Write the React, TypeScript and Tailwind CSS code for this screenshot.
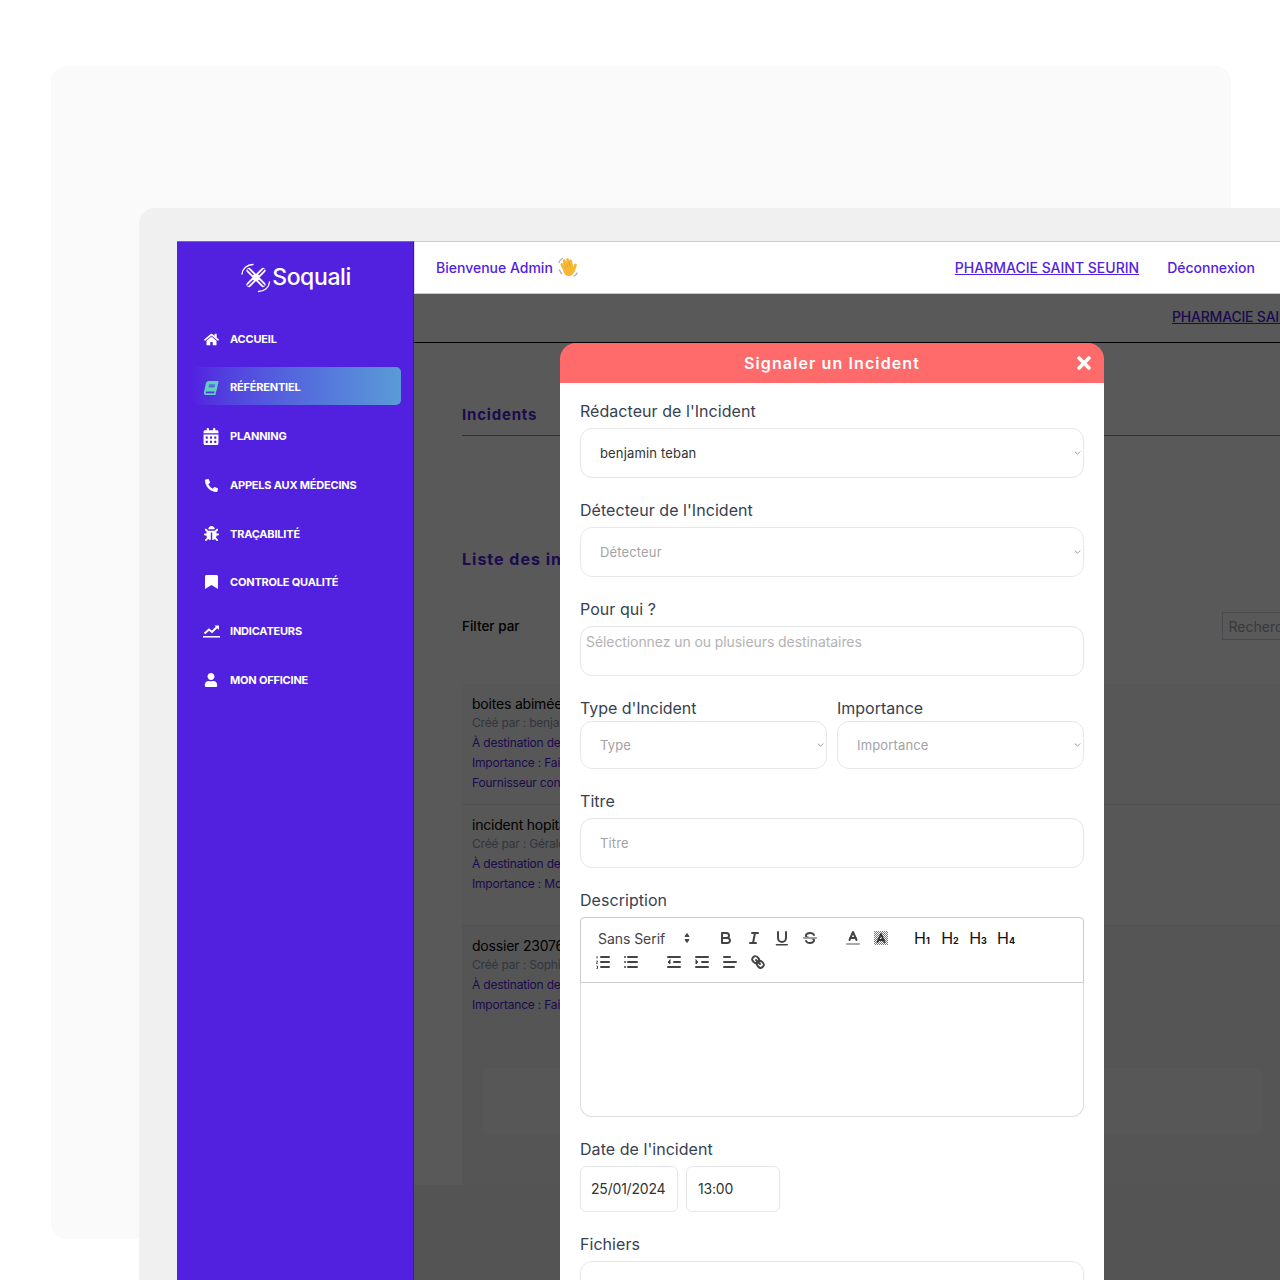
import { FaBook, FaBug, FaCalendarAlt, FaHome, FaPhoneAlt, FaTimes, FaUser } from "react-icons/fa";
import type { ReactNode } from "react";

const inter = "font-['Inter','Noto_Sans',sans-serif]";

const navItems = [
  { label: "ACCUEIL", icon: <FaHome size={15} /> },
  { label: "RÉFÉRENTIEL", icon: <FaBook size={14} className="-skew-x-12 text-[#5fd0c0]" />, active: true },
  { label: "PLANNING", icon: <FaCalendarAlt size={17} /> },
  { label: "APPELS AUX MÉDECINS", icon: <FaPhoneAlt size={13} /> },
  { label: "TRAÇABILITÉ", icon: <FaBug size={15} /> },
  {
    label: "CONTROLE QUALITÉ",
    icon: (
      <svg width="13" height="14" viewBox="0 0 13 14" fill="white">
        <path d="M0 1.500C0 .6.6 0 1.500 0h10c.9 0 1.500.6 1.500 1.500V14L6.500 10 0 14z" />
      </svg>
    ),
  },
  {
    label: "INDICATEURS",
    icon: (
      <svg width="17" height="14" viewBox="0 0 17 14" fill="none" stroke="white" className="shrink-0">
        <path d="M1.500 9.500L6 5.500l3 2.500 5-5" strokeWidth="2" />
        <path d="M11.500 1.500H16V6z" fill="white" stroke="none" />
        <path d="M0 12.800h17" strokeWidth="1.500" />
      </svg>
    ),
  },
  { label: "MON OFFICINE", icon: <FaUser size={14} /> },
];

function Logo() {
  return (
    <svg width="32" height="30" viewBox="0 0 32 30" fill="none" stroke="white" strokeLinecap="round">
      <path d="M2 11C2.500 5.500 7 1.500 13 1.500" strokeWidth="1.300" />
      <path d="M29.500 19c-.5 5.500-5 9.500-11 9.500" strokeWidth="1.300" />
      <path d="M9 7.500l14 14" strokeWidth="5" />
      <path d="M23 7.500l-14 14" strokeWidth="5" />
      <path d="M8 6.500l5 5M19 17.500l5 5M24 6.500l-5 5M13 17.500l-5 5" stroke="#5221e0" strokeWidth="1.400" />
    </svg>
  );
}

function WaveHand() {
  return (
    <svg width="20" height="20" viewBox="0 0 20 20" fill="none" strokeLinecap="round">
      <path d="M1 5.500C1.500 3.500 2.500 2.500 4.500 1.500M1.500 13c.5 1.500 1 2.500 2 3.500M16 19c1.500-.5 2.500-1.500 3-3" stroke="#a9adb3" strokeWidth="1.300" />
      <path d="M6 12L3.800 7.500M8.500 10L6 3.800M11 9L9.500 2.500M13.500 9.500l-.8-5.500M15.500 13.500L17.500 8" stroke="#f7b733" strokeWidth="2.800" />
      <path d="M4.500 10l10-3 2 7c-.5 3-3 5-6 5-3.500 0-5-3-6-9z" fill="#f7b733" />
      <path d="M7 10.500L5.500 6.500M9.500 9.500L8 4.500M12 9l-1-4.500" stroke="#d98f14" strokeWidth=".5" />
    </svg>
  );
}

function Sidebar() {
  return (
    <aside className="w-[237px] shrink-0 bg-[#5221e0] border-t border-t-[#7b5ce0] border-r border-r-[#333333] text-white">
      <div className="flex h-[76px] items-start justify-center pt-[21px] pl-[1px]">
        <Logo />
        <span className="mt-[3px] text-[23px] leading-[23px] font-medium font-['Inter',sans-serif] tracking-[-0.4px]">Soquali</span>
      </div>
      <nav className="flex flex-col gap-[10.7px] pl-[16px] pr-[12px]">
        {navItems.map((item) => (
          <a
            key={item.label}
            className={`flex h-[38px] items-center rounded-[5px] pl-[10px] pt-[4px] ${
              item.active ? "bg-gradient-to-r from-[#5221e0] to-[#5a9ad6]" : ""
            }`}
          >
            <span className="flex w-[16px] justify-center">{item.icon}</span>
            <span className={`ml-[11px] text-[11px] font-bold tracking-[-0.2px] ${inter}`}>{item.label}</span>
          </a>
        ))}
      </nav>
    </aside>
  );
}

function IncidentText({ title, lines }: { title: string; lines: string[] }) {
  return (
    <div className="pl-[10px]">
      <p className="text-[14px] leading-[20px] tracking-[-0.2px] text-black">{title}</p>
      <p className="mb-[1px] text-[12px] leading-[18px] tracking-[-0.2px] text-[#8a9bb0]">{lines[0]}</p>
      {lines.slice(1).map((line) => (
        <p key={line} className="text-[12px] leading-[20px] tracking-[-0.2px] text-[#5221e0]">
          {line}
        </p>
      ))}
    </div>
  );
}

function Background() {
  return (
    <div className={`w-[1100px] bg-white ${inter}`}>
      <div className="h-[49px] border-b border-black pl-[758px] pt-[13px] text-[14px] leading-[20px] font-medium tracking-[-0.2px] text-[#5221e0] underline whitespace-nowrap">
        PHARMACIE SAINT SEURIN
      </div>
      <div className="pl-[48px]">
        <h2 className="mt-[62px] pb-[10px] border-b border-[#5221e0]/60 text-[15px] leading-[20px] font-bold tracking-[0.8px] text-[#5221e0]">
          Incidents
        </h2>
        <h2 className="mt-[113px] text-[16px] leading-[20px] font-bold tracking-[1px] text-[#5221e0]">Liste des incidents</h2>
        <div className="mt-[43px] flex h-[28px] items-center">
          <span className="pt-[1px] text-[13.5px] font-medium text-black">Filter par</span>
          <input
            placeholder="Rechercher"
            className="ml-[702px] h-[28px] w-[190px] border border-[#d1d5db] px-[6px] text-[14px] placeholder:text-[#9ca3af]"
          />
        </div>
        <div className="mt-[44px] w-[830px]">
          <div className="h-[121px] border-b border-[#e5e7eb] bg-[#fafafa] pt-[10px]">
            <IncidentText
              title="boites abimées"
              lines={["Créé par : benjamin teban", "À destination de : tous", "Importance : Faible", "Fournisseur concerné"]}
            />
          </div>
          <div className="h-[121px] border-b border-[#e5e7eb] bg-[#f8f8f8] pt-[10px]">
            <IncidentText title="incident hopital" lines={["Créé par : Gérald", "À destination de : tous", "Importance : Moyenne"]} />
          </div>
          <div className="h-[259px] bg-[#f3f4f6] pt-[10px]">
            <IncidentText title="dossier 23076" lines={["Créé par : Sophie", "À destination de : tous", "Importance : Faible"]} />
            <div className="ml-[21px] mt-[53px] h-[67px] w-[780px] rounded-[8px] bg-[#fafafa]" />
          </div>
        </div>
      </div>
    </div>
  );
}

function Field({ label, children }: { label: string; children: ReactNode }) {
  return (
    <div className="mt-[20px] first:mt-[16px]">
      <label className="mb-[5px] block text-[16px] leading-[24px] tracking-[0.05px] text-[#374151]">{label}</label>
      {children}
    </div>
  );
}

function Select({ placeholder, value, height = "h-[50px]" }: { placeholder: string; value?: string; height?: string }) {
  return (
    <div className="relative">
      <select
        defaultValue={value ?? placeholder}
        className={`${height} w-full appearance-none rounded-[12px] border border-[#e5e7eb] bg-white pl-[19px] pt-[2px] text-[13px] tracking-[0.15px] ${
          value ? "text-[#333333]" : "text-[#a3a3a3]"
        }`}
      >
        <option>{value ?? placeholder}</option>
      </select>
      <svg width="7" height="5" viewBox="0 0 7 5" fill="none" stroke="#9a9a9a" className="absolute right-[3px] top-1/2 -translate-y-1/2">
        <path d="M.8 1l2.700 2.700L6.200 1" strokeWidth="1" />
      </svg>
    </div>
  );
}

function TextInput({ placeholder }: { placeholder: string }) {
  return (
    <input
      placeholder={placeholder}
      className="h-[50px] w-full rounded-[12px] border border-[#e5e7eb] px-[19px] text-[13px] tracking-[0.15px] placeholder:text-[#a3a3a3]"
    />
  );
}

function QlIcon({ children }: { children: ReactNode }) {
  return (
    <button className="flex h-[24px] w-[28px] items-center justify-center">
      <svg width="18" height="18" viewBox="0 0 18 18" fill="none" stroke="#444444" strokeWidth="2" strokeLinecap="round" strokeLinejoin="round">
        {children}
      </svg>
    </button>
  );
}

function HeadingBtn({ level }: { level: number }) {
  return (
    <button className={`flex h-[24px] w-[28px] items-center justify-center text-[16px] leading-none text-[#111111] ${inter}`}>
      H<span className="mt-[4px] text-[9px] font-bold">{level}</span>
    </button>
  );
}

function Toolbar() {
  return (
    <div className="rounded-t-[4px] border border-[#cccccc] p-[8px]">
      <div className="flex h-[24px] items-center">
        <div className={`flex h-[24px] w-[108px] items-center justify-between pl-[9px] pr-[2px] text-[14px] font-normal tracking-[-0.05px] text-[#444444] ${inter}`}>
          Sans Serif
          <svg width="18" height="18" viewBox="0 0 18 18" fill="#444444" stroke="#444444" className="mr-[-1px]">
            <polygon points="7 10.500 9 13.500 11 10.500" />
            <polygon points="7 7.500 9 4.500 11 7.500" />
          </svg>
        </div>
        <div className="ml-[15px] flex">
          <QlIcon>
            <path d="M5,4H9.5A2.5,2.5,0,0,1,12,6.5v0A2.5,2.5,0,0,1,9.5,9H5A0,0,0,0,1,5,9V4A0,0,0,0,1,5,4Z" />
            <path d="M5,9h5.500A2.5,2.5,0,0,1,13,11.500v0A2.5,2.5,0,0,1,10.500,14H5a0,0,0,0,1,0,0V9A0,0,0,0,1,5,9Z" />
          </QlIcon>
          <QlIcon>
            <line x1="7" x2="13" y1="4" y2="4" />
            <line x1="5" x2="11" y1="14" y2="14" />
            <line x1="8" x2="10" y1="14" y2="4" />
          </QlIcon>
          <QlIcon>
            <path d="M5,3V9a4.012,4.012,0,0,0,4,4H9a4.012,4.012,0,0,0,4-4V3" />
            <rect x="3.500" y="15.500" width="11" height=".5" fill="#444444" strokeWidth="1" />
          </QlIcon>
          <QlIcon>
            <line x1="15.500" x2="2.500" y1="9" y2="9" strokeWidth="1" />
            <path d="M9.007,8C6.542,7.791,6,7.519,6,6.500,6,5.792,7.283,5,9,5c1.571,0,2.765.679,2.969,1.309a1,1,0,0,0,1.900-.617C13.356,4.106,11.354,3,9,3,6.200,3,4,4.538,4,6.500a3.200,3.200,0,0,0,.500,1.843Z" fill="#444444" stroke="none" />
            <path d="M8.984,10C11.457,10.208,12,10.479,12,11.500c0,.708-1.283,1.500-3,1.500-1.571,0-2.765-.679-2.969-1.309a1,1,0,1,0-1.900.617C4.644,13.894,6.646,15,9,15c2.800,0,5-1.538,5-3.500a3.200,3.200,0,0,0-.500-1.843Z" fill="#444444" stroke="none" />
          </QlIcon>
        </div>
        <div className="ml-[15px] flex">
          <QlIcon>
            <line x1="3" x2="15" y1="15" y2="15" stroke="#a8a8a8" />
            <polyline points="5.500 11 9 3 12.500 11" />
            <line x1="11.630" x2="6.380" y1="9" y2="9" />
          </QlIcon>
          <QlIcon>
            <defs>
              <pattern id="hatch" width="2" height="2" patternUnits="userSpaceOnUse">
                <rect width="1" height="1" fill="#777777" stroke="none" />
                <rect x="1" y="1" width="1" height="1" fill="#777777" stroke="none" />
              </pattern>
            </defs>
            <rect x="2" y="2" width="14" height="14" fill="url(#hatch)" stroke="none" />
            <polyline points="5.500 13 9 5 12.500 13" stroke="#333333" strokeWidth="1.800" />
            <line x1="11.630" x2="6.380" y1="11" y2="11" stroke="#333333" strokeWidth="1.800" />
          </QlIcon>
        </div>
        <div className="ml-[13px] flex">
          <HeadingBtn level={1} />
          <HeadingBtn level={2} />
          <HeadingBtn level={3} />
          <HeadingBtn level={4} />
        </div>
      </div>
      <div className="flex h-[24px] items-center">
        <div className="flex">
          <QlIcon>
            <line x1="7" x2="15" y1="4" y2="4" />
            <line x1="7" x2="15" y1="9" y2="9" />
            <line x1="7" x2="15" y1="14" y2="14" />
            <path d="M3 3v2.500M2.500 8h1l-1 2.500h1M2.500 13h1v2.500h-1" strokeWidth="1" strokeLinecap="butt" strokeLinejoin="miter" />
          </QlIcon>
          <QlIcon>
            <line x1="6" x2="15" y1="4" y2="4" />
            <line x1="6" x2="15" y1="9" y2="9" />
            <line x1="6" x2="15" y1="14" y2="14" />
            <line x1="3" x2="3" y1="4" y2="4" />
            <line x1="3" x2="3" y1="9" y2="9" />
            <line x1="3" x2="3" y1="14" y2="14" />
          </QlIcon>
        </div>
        <div className="ml-[15px] flex">
          <QlIcon>
            <line x1="3" x2="15" y1="14" y2="14" />
            <line x1="3" x2="15" y1="4" y2="4" />
            <line x1="9" x2="15" y1="9" y2="9" />
            <polyline points="5 7 5 11 3 9 5 7" fill="#444444" strokeWidth="1" />
          </QlIcon>
          <QlIcon>
            <line x1="3" x2="15" y1="14" y2="14" />
            <line x1="3" x2="15" y1="4" y2="4" />
            <line x1="9" x2="15" y1="9" y2="9" />
            <polyline points="3 7 3 11 5 9 3 7" fill="#444444" strokeWidth="1" />
          </QlIcon>
          <QlIcon>
            <line x1="3" x2="15" y1="9" y2="9" />
            <line x1="3" x2="13" y1="14" y2="14" />
            <line x1="3" x2="9" y1="4" y2="4" />
          </QlIcon>
          <QlIcon>
            <line x1="7" x2="11" y1="7" y2="11" />
            <path d="M8.900,4.577a3.476,3.476,0,0,1,.360,4.679A3.476,3.476,0,0,1,4.577,8.900C3.185,7.500,2.035,6.400,4.217,4.217S7.500,3.185,8.900,4.577Z" />
            <path d="M13.423,9.100a3.476,3.476,0,0,0-4.679-.360,3.476,3.476,0,0,0,.360,4.679c1.392,1.392,2.500,2.542,4.679.360S14.815,10.500,13.423,9.100Z" />
          </QlIcon>
        </div>
      </div>
    </div>
  );
}

function IncidentModal() {
  return (
    <div className={`absolute left-[146px] top-[49px] w-[544px] ${inter}`}>
      <div className="relative flex h-[40px] items-center justify-center rounded-t-[16px] bg-[#ff6b6b] text-[16px] font-semibold tracking-[1.1px] text-white">
        Signaler un Incident
        <FaTimes size={20} className="absolute right-[10px] top-[10px]" />
      </div>
      <div className="bg-white px-[20px] pb-[20px]">
        <div className="flow-root">
          <Field label="Rédacteur de l'Incident">
            <Select placeholder="benjamin teban" value="benjamin teban" />
          </Field>
          <Field label="Détecteur de l'Incident">
            <Select placeholder="Détecteur" />
          </Field>
          <Field label="Pour qui ?">
            <textarea
              placeholder="Sélectionnez un ou plusieurs destinataires"
              className="block h-[50px] w-full resize-none rounded-[12px] border border-[#e5e7eb] px-[5px] py-[5px] text-[14px] leading-[20px] tracking-[-0.08px] placeholder:text-[#b3b3b3]"
            />
          </Field>
          <div className="mt-[20px] grid grid-cols-2 gap-x-[10px]">
            <div>
              <label className="mb-[1px] block text-[16px] leading-[24px] tracking-[-0.05px] text-[#374151]">Type d'Incident</label>
              <Select placeholder="Type" height="h-[48px]" />
            </div>
            <div>
              <label className="mb-[1px] block text-[16px] leading-[24px] text-[#374151]">Importance</label>
              <Select placeholder="Importance" height="h-[48px]" />
            </div>
          </div>
          <Field label="Titre">
            <TextInput placeholder="Titre" />
          </Field>
          <Field label="Description">
            <Toolbar />
            <div className="h-[134px] rounded-b-[12px] border border-t-0 border-[#dddddd]" />
          </Field>
          <Field label="Date de l'incident">
            <div className="flex gap-[8px]">
              <input
                defaultValue="25/01/2024"
                className="h-[46px] w-[98px] rounded-[6px] border border-[#e5e7eb] pb-[1px] pl-[10px] text-[14px] tracking-[-0.2px] text-[#333333]"
              />
              <input
                defaultValue="13:00"
                className="h-[46px] w-[94px] rounded-[6px] border border-[#e5e7eb] pb-[1px] pl-[11px] text-[14px] tracking-[-0.2px] text-[#333333]"
              />
            </div>
          </Field>
          <Field label="Fichiers">
            <div className="h-[100px] rounded-[12px] border border-[#e5e7eb] pt-[13px] text-center text-[14px] text-[#555555]">
              Déposez vos fichiers ici
            </div>
          </Field>
        </div>
      </div>
    </div>
  );
}

export default function App() {
  return (
    <div className="relative h-[1280px] w-[1280px] overflow-hidden bg-white pl-[51px] pt-[66px]">
      <div className="h-[1173px] w-[1180px] rounded-[16px] bg-[#fafafa]" />
      {/* app window sits over the lighter backdrop card */}
      <div className="absolute left-[139px] top-[208px] h-[1072px] w-[1141px] rounded-tl-[16px] bg-[#f0f0f0] pl-[38px] pt-[33px]">
        <div className="flex h-[1039px] w-[1103px]">
          <Sidebar />
          <main className="flex min-w-0 flex-1 flex-col">
            <header className={`flex h-[53px] shrink-0 items-center border-y border-t-[#c3cde0] border-b-[#c8c8c8] border-l border-l-[#ded8f5] bg-white pb-[1px] pl-[21px] pr-[25px] text-[14px] font-medium text-[#5221e0] ${inter}`}>
              <span>Bienvenue Admin</span>
              <span className="ml-[5px]">
                <WaveHand />
              </span>
              <a className="ml-auto underline">PHARMACIE SAINT SEURIN</a>
              <a className="ml-[28px]">Déconnexion</a>
            </header>
            <div className="relative flex-1 overflow-hidden">
              <Background />
              <div className="absolute inset-0 bg-black/65" />
              <IncidentModal />
            </div>
          </main>
        </div>
      </div>
    </div>
  );
}
